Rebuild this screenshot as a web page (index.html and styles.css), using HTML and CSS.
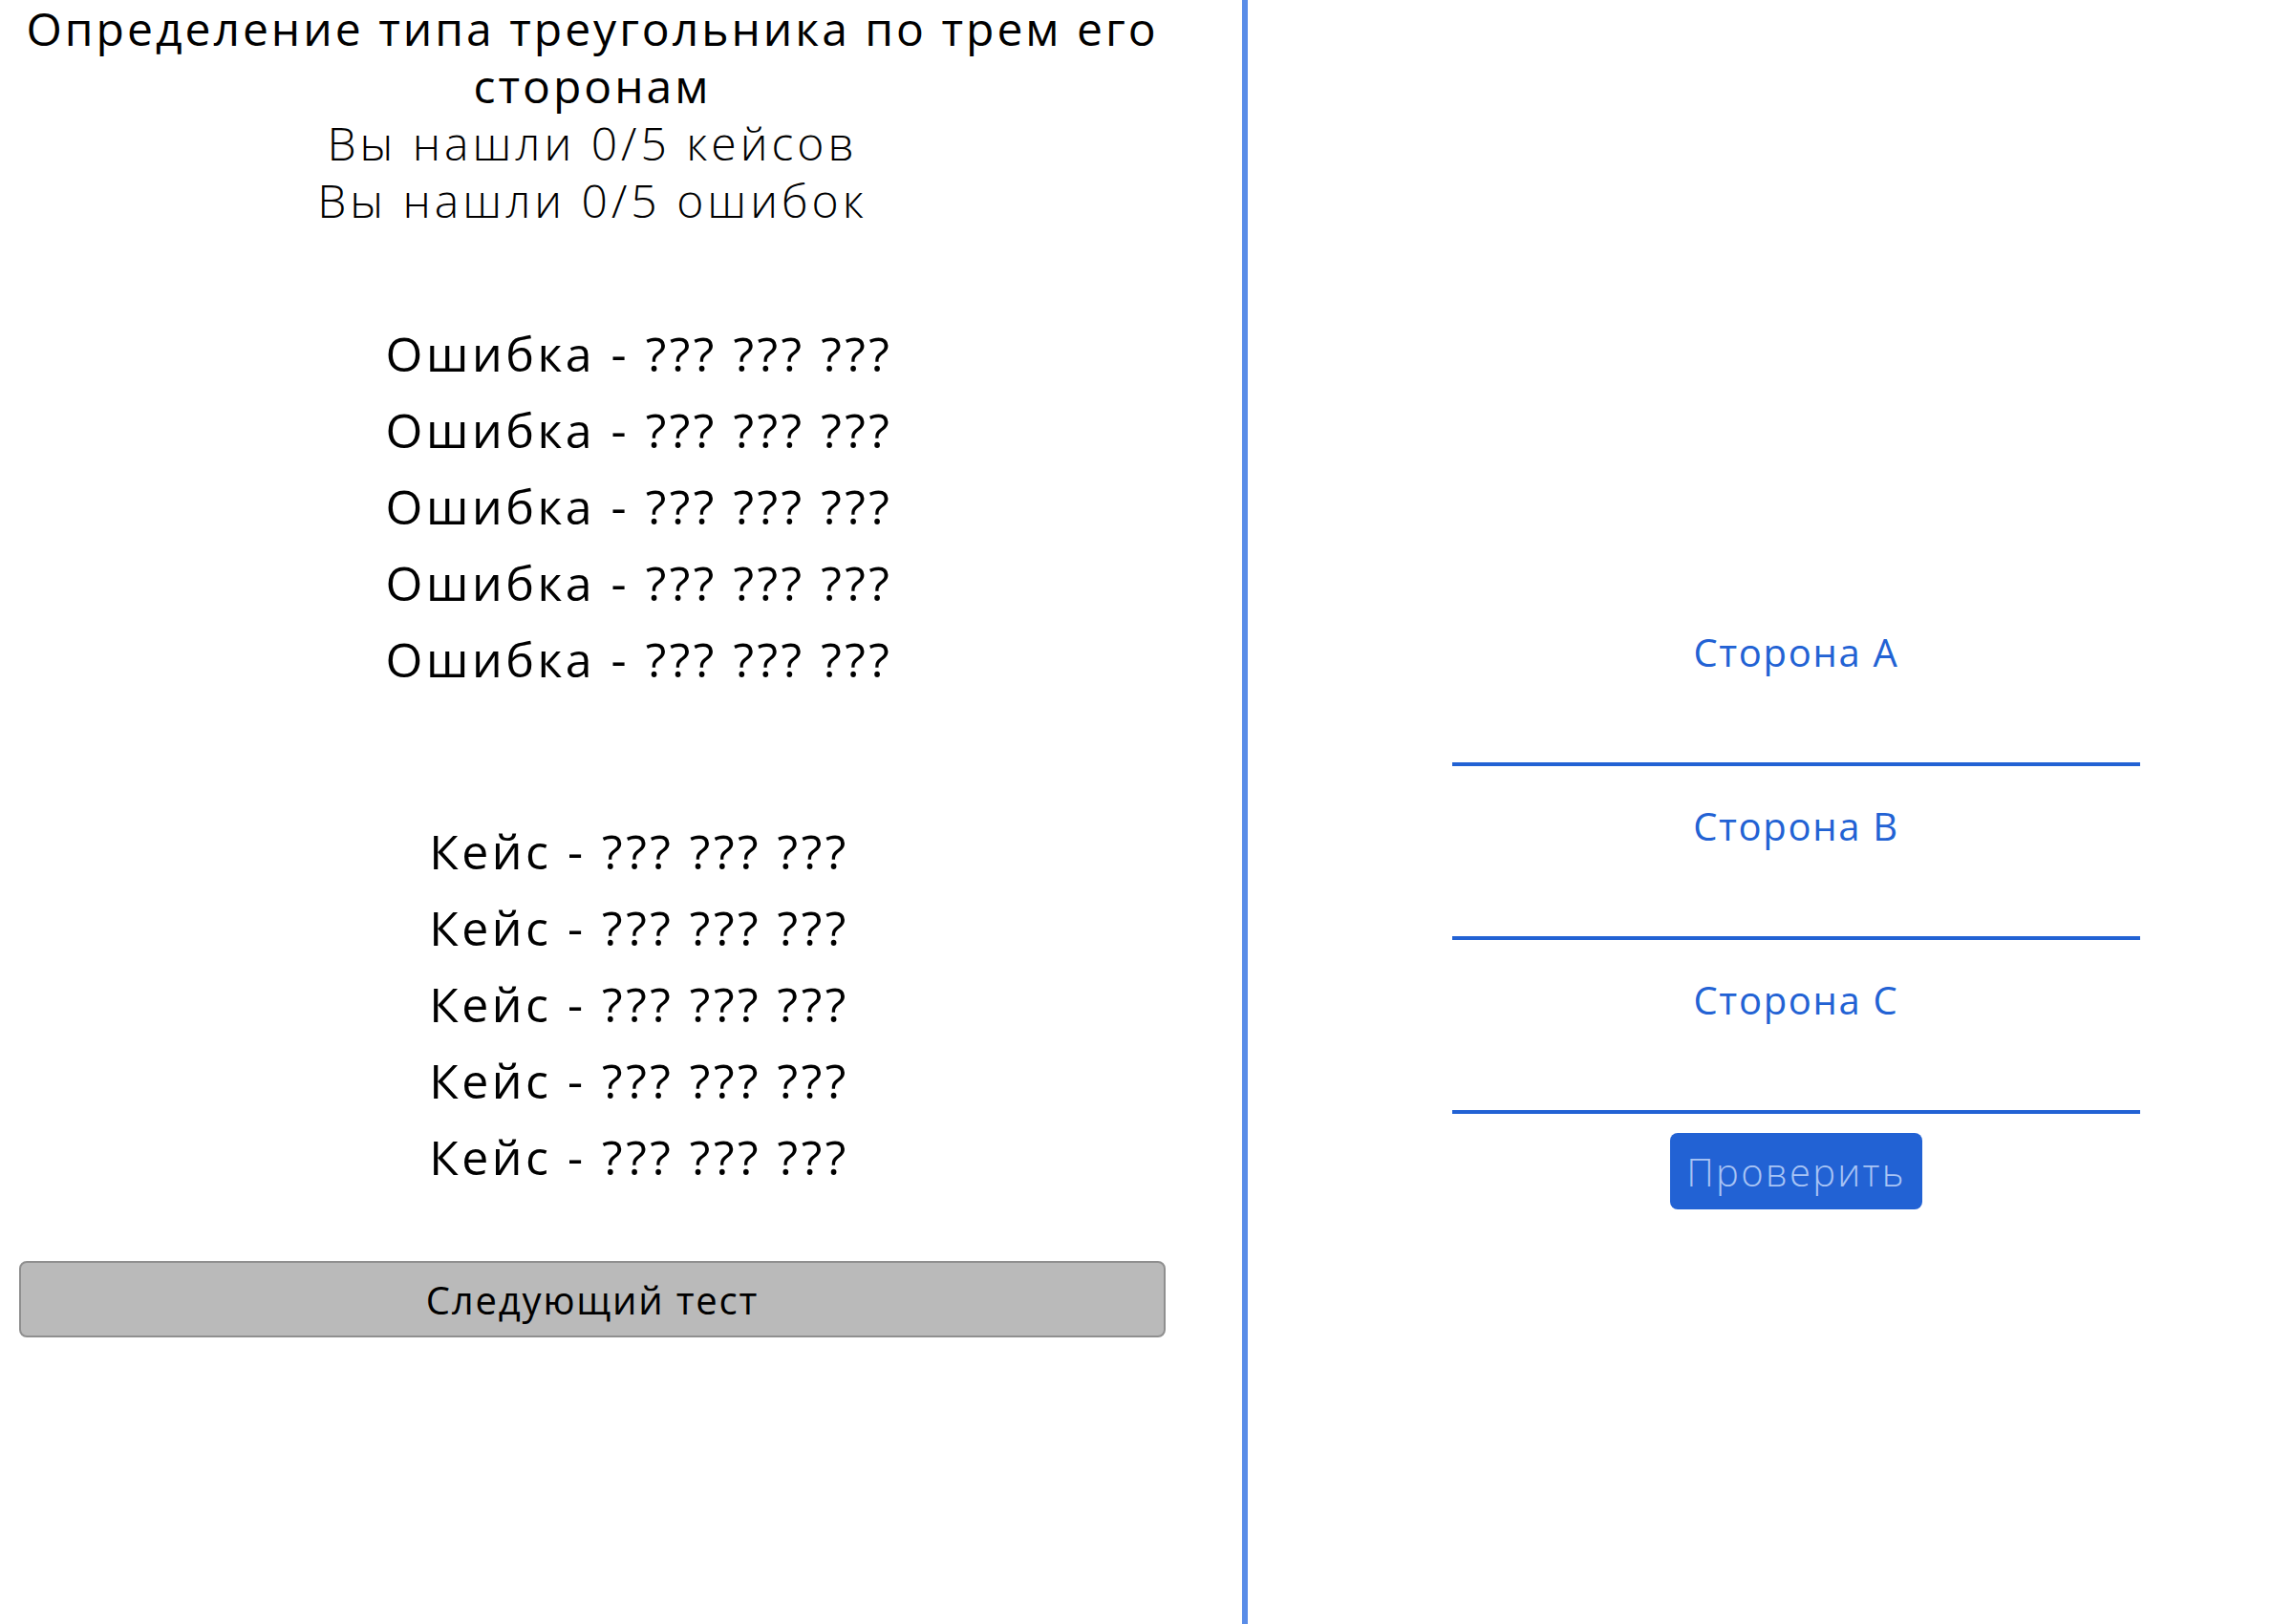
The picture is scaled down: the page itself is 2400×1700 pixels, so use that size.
FILE: index.html
```html
<!DOCTYPE html>
<html lang="ru">
<head>
<meta charset="utf-8">
<title>Определение типа треугольника</title>
<link rel="stylesheet" href="styles.css">
</head>
<body>
<div class="page">
  <section class="left">
    <h1 class="title">Определение типа треугольника по трем его сторонам</h1>
    <p class="counter">Вы нашли 0/5 кейсов</p>
    <p class="counter">Вы нашли 0/5 ошибок</p>
    <ul class="list errors">
      <li>Ошибка - ??? ??? ???</li>
      <li>Ошибка - ??? ??? ???</li>
      <li>Ошибка - ??? ??? ???</li>
      <li>Ошибка - ??? ??? ???</li>
      <li>Ошибка - ??? ??? ???</li>
    </ul>
    <ul class="list cases">
      <li>Кейс - ??? ??? ???</li>
      <li>Кейс - ??? ??? ???</li>
      <li>Кейс - ??? ??? ???</li>
      <li>Кейс - ??? ??? ???</li>
      <li>Кейс - ??? ??? ???</li>
    </ul>
    <button class="next-btn" type="button">Следующий тест</button>
  </section>
  <section class="right">
    <form class="form">
      <label class="field">
        <span class="field-label">Сторона A</span>
        <input class="field-input" type="text">
      </label>
      <label class="field">
        <span class="field-label">Сторона B</span>
        <input class="field-input" type="text">
      </label>
      <label class="field">
        <span class="field-label">Сторона C</span>
        <input class="field-input" type="text">
      </label>
      <button class="check-btn" type="button">Проверить</button>
    </form>
  </section>
</div>
</body>
</html>
```
FILE: styles.css
```css
html, body {
  margin: 0;
  padding: 0;
  background: #ffffff;
}
body {
  font-family: "Open Sans", "Noto Sans", sans-serif;
  color: #000;
}
.page {
  display: flex;
  width: 2400px;
  min-height: 1700px;
}
.left {
  width: 1300px;
  box-sizing: border-box;
  padding: 0 80px 0 20px;
  display: flex;
  flex-direction: column;
  text-align: center;
}
.title {
  margin: 0;
  font-size: 48px;
  line-height: 60px;
  font-weight: 500;
  letter-spacing: 3px;
}
.counter {
  margin: 0;
  font-size: 48px;
  line-height: 60px;
  font-weight: 300;
  letter-spacing: 4px;
}
.list {
  list-style: none;
  margin: 0;
  padding: 0 0 0 98px;
}
.list li {
  font-size: 50px;
  line-height: 80px;
  font-weight: 400;
  letter-spacing: 3.5px;
}
.errors {
  margin-top: 90px;
}
.cases {
  margin-top: 121px;
}
.next-btn {
  margin-top: 69px;
  height: 80px;
  width: 100%;
  background: #bababa;
  border: 2px solid #8f8f8f;
  border-radius: 8px;
  font-family: inherit;
  font-size: 40px;
  font-weight: 500;
  color: #000;
  letter-spacing: 1.8px;
}
.right {
  flex: 1;
  border-left: 6px solid #5a8de8;
  box-sizing: border-box;
  padding: 620px 0 0 214px;
}
.form {
  width: 720px;
  display: flex;
  flex-direction: column;
  align-items: center;
}
.field {
  width: 100%;
  height: 182px;
  box-sizing: border-box;
  display: flex;
  flex-direction: column;
  align-items: center;
  padding-top: 38px;
  border-bottom: 4px solid #2262d4;
}
.field-label {
  font-size: 40px;
  line-height: 50px;
  font-weight: 500;
  color: #2262d4;
  letter-spacing: 1.7px;
}
.field-input {
  flex: 1;
  width: 100%;
  border: none;
  outline: none;
  background: transparent;
  font-family: inherit;
  font-size: 40px;
}
.check-btn {
  margin-top: 20px;
  width: 264px;
  height: 80px;
  background: #2262d4;
  border: none;
  border-radius: 8px;
  color: #a8c4f5;
  font-family: inherit;
  font-size: 40px;
  font-weight: 300;
  letter-spacing: 2.3px;
}
```
